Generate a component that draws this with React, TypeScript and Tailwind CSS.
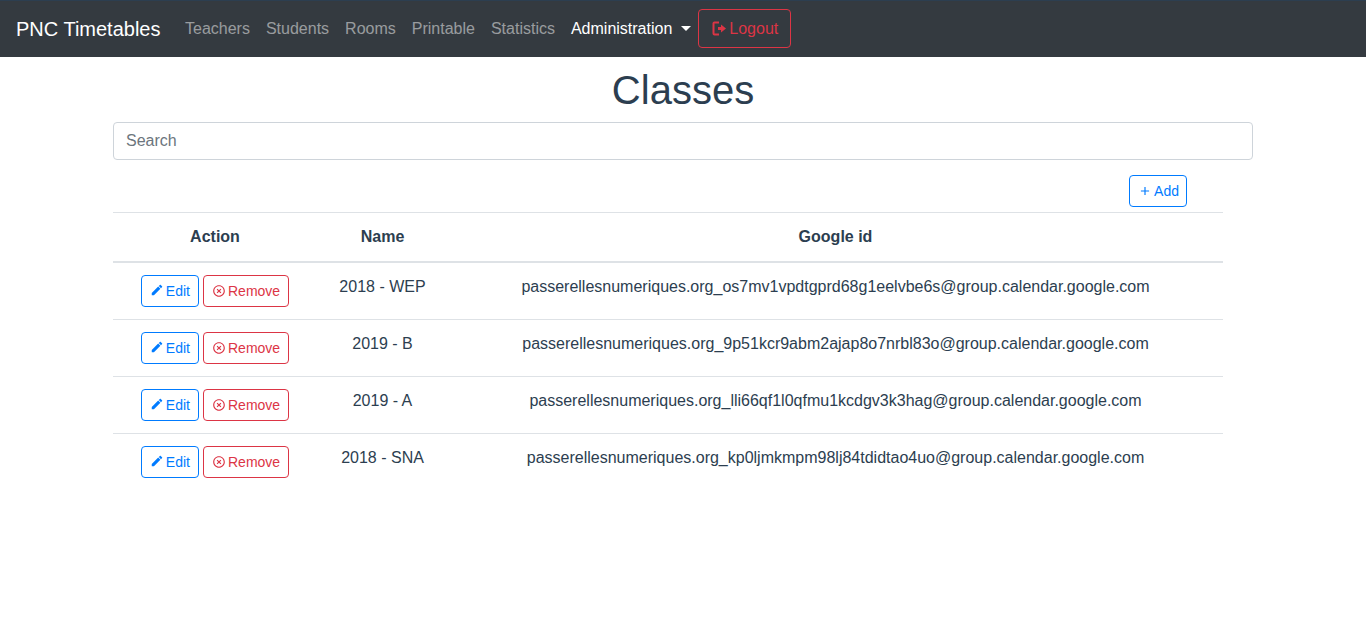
const classes = [
  { name: "2018 - WEP", googleId: "passerellesnumeriques.org_os7mv1vpdtgprd68g1eelvbe6s@group.calendar.google.com" },
  { name: "2019 - B", googleId: "passerellesnumeriques.org_9p51kcr9abm2ajap8o7nrbl83o@group.calendar.google.com" },
  { name: "2019 - A", googleId: "passerellesnumeriques.org_lli66qf1l0qfmu1kcdgv3k3hag@group.calendar.google.com" },
  { name: "2018 - SNA", googleId: "passerellesnumeriques.org_kp0ljmkmpm98lj84tdidtao4uo@group.calendar.google.com" },
];

const links = ["Teachers", "Students", "Rooms", "Printable", "Statistics"];

function LogoutIcon() {
  return (
    <svg viewBox="0 0 15 15" className="mr-[2px] h-[15px] w-[15px]" fill="none">
      <path d="M7 1.5H2.5a1 1 0 0 0-1 1v10a1 1 0 0 0 1 1H7" stroke="currentColor" strokeWidth="2" />
      <path d="M6 6h3V3.5L14 7.5 9 11.5V9H6z" fill="currentColor" />
    </svg>
  );
}

function EditIcon() {
  return (
    <svg viewBox="0 0 24 24" className="mt-[-3px] mr-[2px] h-[14px] w-[14px]" fill="currentColor">
      <path d="M3 17.25V21h3.75L17.81 9.94l-3.75-3.75L3 17.25zM20.71 7.04c.39-.39.39-1.02 0-1.41l-2.34-2.34c-.39-.39-1.02-.39-1.41 0l-1.83 1.83 3.75 3.75 1.83-1.83z" />
    </svg>
  );
}

function RemoveIcon() {
  return (
    <svg viewBox="0 0 24 24" className="mt-[-2px] mr-[2px] h-[14px] w-[14px]" fill="currentColor">
      <path d="M14.59 8L12 10.59 9.41 8 8 9.41 10.59 12 8 14.59 9.41 16 12 13.41 14.59 16 16 14.59 13.41 12 16 9.41 14.59 8zM12 2C6.47 2 2 6.47 2 12s4.47 10 10 10 10-4.47 10-10S17.53 2 12 2zm0 18c-4.41 0-8-3.59-8-8s3.59-8 8-8 8 3.59 8 8-3.59 8-8 8z" />
    </svg>
  );
}

function AddIcon() {
  return (
    <svg viewBox="0 0 24 24" className="mr-[2px] h-[14px] w-[14px]" fill="currentColor">
      <path d="M19 13h-6v6h-2v-6H5v-2h6V5h2v6h6v2z" />
    </svg>
  );
}

export default function App() {
  return (
    <div className="min-h-[632px] bg-white font-['Liberation_Sans',Arial,sans-serif] text-[16px] text-[#2c3e50]">
      {/* Navbar */}
      <nav className="flex h-[57px] items-center border-t border-[#2c3e50] bg-[#343a40] pb-px pl-4">
        <span className="mr-[16.5px] text-[20px] text-white">PNC Timetables</span>
        <div className="flex items-center">
          {links.map((link) => (
            <span key={link} className="px-2 text-[rgba(255,255,255,0.5)]">
              {link}
            </span>
          ))}
          <span className="flex items-center px-2 text-white">
            Administration
            <span className="ml-[9px] h-0 w-0 border-x-[5px] border-t-[5px] border-x-transparent border-t-white" />
          </span>
          <button className="ml-[-1px] flex h-[39px] items-center rounded border border-[#dc3545] pr-[12px] pl-[13px] text-[#dc3545]">
            <LogoutIcon />
            Logout
          </button>
        </div>
      </nav>

      <main className="mx-[113px]">
        <h1 className="mt-[9px] mb-2 text-center text-[40px] leading-[48px]">Classes</h1>
        <input
          placeholder="Search"
          className="block h-[38px] w-full rounded border border-[#ced4da] px-3 text-[16px] placeholder:text-[#6c757d]"
        />
        <div className="mt-[15px] mb-[5px] flex w-[1074px] justify-end">
          <button className="flex h-[32px] items-center rounded border border-[#007bff] pr-[7px] pl-2 text-[14px] text-[#007bff]">
            <AddIcon />
            Add
          </button>
        </div>

        {/* Classes table */}
        <table className="w-[1110px] table-fixed border-collapse">
          <colgroup>
            <col className="w-[204px]" />
            <col className="w-[131px]" />
            <col />
          </colgroup>
          <thead>
            <tr className="h-[49px] border-t border-b-2 border-[#dee2e6]">
              <th className="font-bold">Action</th>
              <th className="font-bold">Name</th>
              <th className="font-bold">Google id</th>
            </tr>
          </thead>
          <tbody>
            {classes.map((c, i) => (
              <tr key={c.name} className={i < classes.length - 1 ? "h-[57px] border-b border-[#dee2e6]" : "h-[57px]"}>
                <td className="p-3 align-top">
                  <div className="flex justify-center gap-1">
                    <button className="flex h-[32px] items-center rounded border border-[#007bff] px-2 pt-[2px] text-[14px] text-[#007bff]">
                      <EditIcon />
                      Edit
                    </button>
                    <button className="flex h-[32px] items-center rounded border border-[#dc3545] px-2 pt-[2px] text-[14px] text-[#dc3545]">
                      <RemoveIcon />
                      Remove
                    </button>
                  </div>
                </td>
                <td className="p-3 text-center align-top leading-[24px]">{c.name}</td>
                <td className="p-3 text-center align-top leading-[24px]">{c.googleId}</td>
              </tr>
            ))}
          </tbody>
        </table>
      </main>
    </div>
  );
}
